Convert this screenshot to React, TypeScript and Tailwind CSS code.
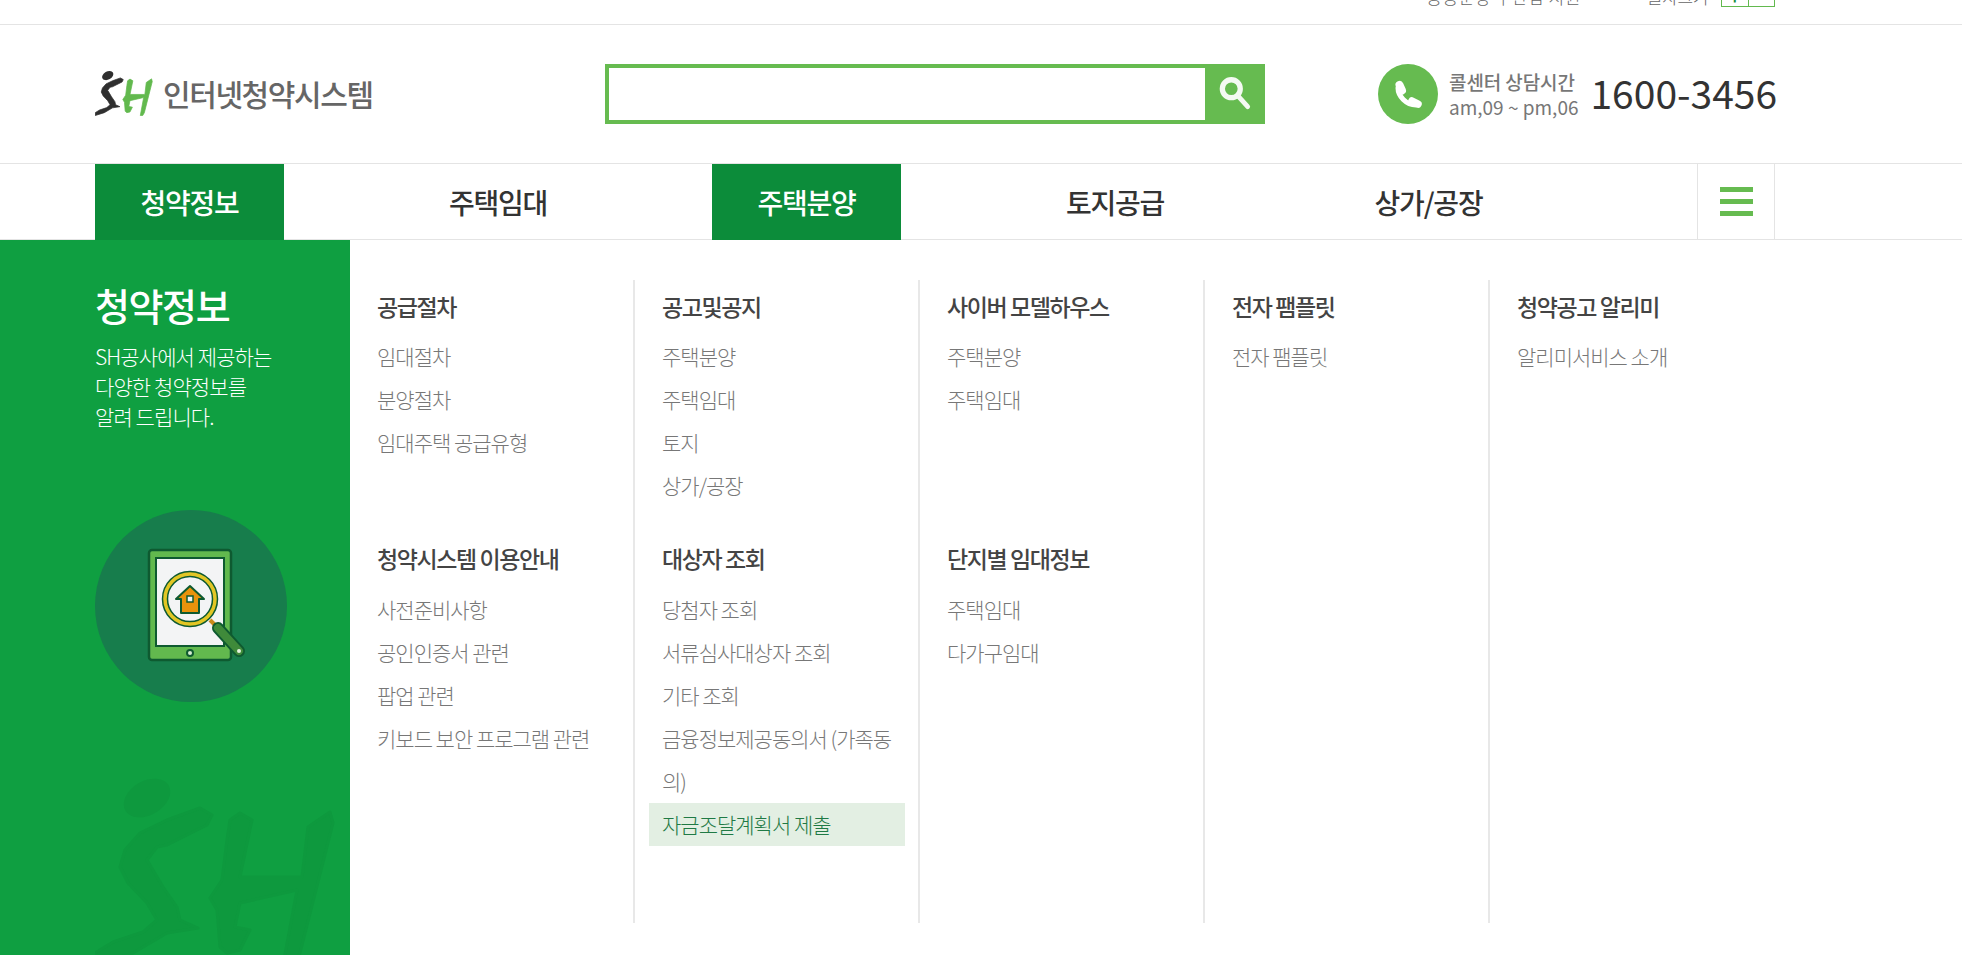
import React from "react";

const font = "font-['Noto_Sans_CJK_KR','Noto_Sans',sans-serif]";

const navItems = [
  { name: "청약정보", active: true, width: "w-[189px]" },
  { name: "주택임대", width: "w-[189px]" },
  { name: "주택분양", active: true, width: "w-[189px]" },
  { name: "토지공급", width: "w-[189px]" },
  { name: "상가/공장", width: "w-[199px]" },
];

const columns = [
  [
    { title: "공급절차", links: ["임대절차", "분양절차", "임대주택 공급유형"] },
    { title: "청약시스템 이용안내", links: ["사전준비사항", "공인인증서 관련", "팝업 관련", "키보드 보안 프로그램 관련"] },
  ],
  [
    { title: "공고및공지", links: ["주택분양", "주택임대", "토지", "상가/공장"] },
    { title: "대상자 조회", links: ["당첨자 조회", "서류심사대상자 조회", "기타 조회", "금융정보제공동의서 (가족동의)", "자금조달계획서 제출"] },
  ],
  [
    { title: "사이버 모델하우스", links: ["주택분양", "주택임대"] },
    { title: "단지별 임대정보", links: ["주택임대", "다가구임대"] },
  ],
  [{ title: "전자 팸플릿", links: ["전자 팸플릿"] }],
  [{ title: "청약공고 알리미", links: ["알리미서비스 소개"] }],
];

// runner + H mark, used for the header logo and the watermark
const SHLogo = ({ dark, green, className }: { dark: string; green: string; className?: string }) => (
  <svg viewBox="0 0 240 192" className={className}>
    <ellipse cx="52" cy="23" rx="25" ry="17" fill={dark} transform="rotate(-30 52 23)" />
    <path
      d="M117 40 L105 33 L72 45 L45 58 L30 75 L25 92 L33 108 L52 128 L62 145 L48 157 L18 167 L0 178 L0 190 L38 178 L72 158 L103 153 L85 145 L82 132 L68 112 L52 85 L62 72 L72 70 L112 50 Z"
      fill={dark}
      stroke={dark}
      strokeWidth="3"
      strokeLinejoin="round"
    />
    <path
      d="M145 38 L157 45 L145 102 L207 102 L213 52 L235 37 L238 48 L205 178 L198 190 L188 190 L202 115 L145 128 L140 152 L155 155 L145 175 L132 178 L125 172 L122 135 L115 123 L127 105 L132 65 L135 45 Z"
      fill={green}
      stroke={green}
      strokeWidth="3"
      strokeLinejoin="round"
    />
  </svg>
);

const TabletIcon = () => (
  <svg viewBox="0 0 192 192" className="w-[192px] h-[192px]">
    <circle cx="96" cy="96" r="96" fill="#177d4c" />
    <g transform="translate(-2 -2)">
      <rect x="56" y="42" width="82" height="110" rx="3" fill="#62b94e" stroke="#0e5a30" strokeWidth="2.5" />
      <rect x="63" y="50" width="68" height="88" fill="#f3f4f5" stroke="#0e5a30" strokeWidth="2" />
      <circle cx="97" cy="145" r="3" fill="#d8ecd2" stroke="#0e5a30" strokeWidth="2" />
      <circle cx="97" cy="91" r="25" fill="#f3f4f5" stroke="#0e5a30" strokeWidth="6.5" />
      <circle cx="97" cy="91" r="25" fill="none" stroke="#e2c624" strokeWidth="3.5" />
      <path d="M83 91 L97 78 L111 91 L106 91 L106 105 L88 105 L88 91 Z" fill="#e8930c" stroke="#0e5a30" strokeWidth="2" strokeLinejoin="round" />
      <rect x="94" y="88" width="6" height="6" fill="#f3f4f5" stroke="#0e5a30" strokeWidth="1.5" />
      <path d="M117 112 L124 119" stroke="#c98a1a" strokeWidth="4" />
      <path d="M125 120 L146 143" stroke="#0e5a30" strokeWidth="12" strokeLinecap="round" />
      <path d="M125 120 L146 143" stroke="#3f8a3a" strokeWidth="8" strokeLinecap="round" />
      <circle cx="146" cy="143" r="2" fill="#e6f3e0" />
    </g>
  </svg>
);

const App = () => {
  return (
    <div className={`${font} w-full h-[955px] overflow-hidden bg-white text-[#333]`}>
      {/* top bar, text is cut by the edge of the screenshot */}
      <div className="h-[25px] border-b border-[#e4e4e4] overflow-hidden">
        <div className="ml-[95px] w-[1680px] -mt-[14px] h-[21px] flex justify-end items-end text-[17px] leading-[21px] font-light text-[#666]">
          <span className="tracking-[0.6px]">공공분양 무관심 지원</span>
          <span className="ml-[66px] tracking-[-0.4px]">글자크기</span>
          <div className="ml-[13px] w-[54px] h-[21px] border border-[#62b94e] flex">
            <span className="w-[27px] border-r border-[#62b94e] text-center text-[#0c8c3a] font-bold leading-[19px]">+</span>
            <span className="w-[26px] text-center leading-[19px]">-</span>
          </div>
        </div>
      </div>

      {/* header */}
      <div className="h-[139px] border-b border-[#e4e4e4]">
        <div className="ml-[95px] w-[1680px] h-full flex items-center">
          <div className="w-[510px] shrink-0 flex items-center -mt-[3px]">
            <SHLogo dark="#2f2f2f" green="#62b94e" className="w-[58px] h-[46px]" />
            <span className="ml-[10px] mt-[1px] text-[30px] leading-[38px] tracking-[-1.4px] text-[#666] font-medium">인터넷청약시스템</span>
          </div>
          <div className="w-[660px] h-[60px] flex border-[4px] border-[#66bb50] shrink-0">
            <div className="flex-1 bg-white" />
            <div className="w-[60px] -mr-[4px] -my-[4px] bg-[#66bb50] flex items-center justify-center">
              <svg viewBox="0 0 32 36" className="w-[34px] h-[38px]">
                <circle cx="12.5" cy="13" r="8.5" fill="none" stroke="#f4faf2" strokeWidth="5" />
                <path d="M19 20 L28 30" stroke="#f4faf2" strokeWidth="4.5" strokeLinecap="round" />
              </svg>
            </div>
          </div>
          <div className="ml-[113px] flex items-center">
            <div className="w-[60px] h-[60px] rounded-full bg-[#66bb50]">
              <svg viewBox="0 0 60 60" className="w-[60px] h-[60px]" fill="none" stroke="#fff" strokeLinecap="round">
                <path d="M21.5 21 L24 26.5" strokeWidth="8" />
                <path d="M20 24 C20 32 28 41 38 41" strokeWidth="5" />
                <path d="M34 37 L40 40" strokeWidth="7.5" />
              </svg>
            </div>
            <div className="ml-[11px] flex flex-col text-[#777] whitespace-nowrap">
              <span className="text-[19px] leading-[25px] tracking-[-0.1px] font-medium">콜센터 상담시간</span>
              <span className="text-[19px] leading-[25px] tracking-[0px]">am,09 ~ pm,06</span>
            </div>
            <span className="ml-[12px] -mt-[4px] text-[39px] leading-[44px] text-[#333] whitespace-nowrap">1600-3456</span>
          </div>
        </div>
      </div>

      {/* main nav */}
      <div className="h-[76px] border-b border-[#e4e4e4]">
        <div className="ml-[95px] w-[1680px] h-[75px] flex justify-between">
          <div className="flex gap-[119.5px]">
            {navItems.map((item) => (
              <div
                key={item.name}
                className={`${item.width} h-[76px] flex items-center justify-center text-[28px] tracking-[-1.2px] font-medium ${
                  item.active ? "bg-[#0c8c3a] text-white" : "text-[#333]"
                }`}
              >
                {item.name}
              </div>
            ))}
          </div>
          <div className="w-[78px] border-x border-[#e4e4e4] flex flex-col items-center justify-center gap-[7px]">
            <span className="w-[33px] h-[5px] bg-[#66bb50]" />
            <span className="w-[33px] h-[5px] bg-[#66bb50]" />
            <span className="w-[33px] h-[5px] bg-[#66bb50]" />
          </div>
        </div>
      </div>

      {/* dropdown */}
      <div className="flex h-[715px]">
        <div className="w-[350px] shrink-0 bg-[#0f9f41] pl-[95px] relative overflow-hidden">
          <h2 className="mt-[37px] text-[38px] leading-[56px] tracking-[-1.4px] font-medium text-white">청약정보</h2>
          <p className="mt-[8px] text-[21px] leading-[30px] tracking-[-0.9px] font-light text-white">
            SH공사에서 제공하는
            <br />
            다양한 청약정보를
            <br />
            알려 드립니다.
          </p>
          <div className="mt-[79px]">
            <TabletIcon />
          </div>
          <SHLogo dark="#0e993e" green="#0e993e" className="absolute left-0 top-[535px] ml-[95px] w-[240px] h-[192px]" />
        </div>
        <div className="flex pt-[40px] h-[683px]">
          {columns.map((col, i) => (
            <div
              key={i}
              className={`w-[285px] pl-[14px] pt-[10px] ${i < 4 ? "border-r-2 border-[#e8e8e8]" : ""}`}
            >
              {col.map((group, g) => (
                <div key={group.title} className={`w-[256px] ${g === 0 ? "h-[252px]" : ""}`}>
                  <h3 className="pl-[13px] text-[23px] leading-[32px] tracking-[-1.4px] font-medium text-[#444]">{group.title}</h3>
                  <ul className={g === 0 ? "mt-[13px]" : "mt-[14px]"}>
                    {group.links.map((link) => (
                      <li
                        key={link}
                        className={`px-[13px] text-[21px] leading-[43px] tracking-[-1px] font-light ${
                          link === "자금조달계획서 제출" ? "bg-[#e3efe3] text-[#1f7a45]" : "text-[#777]"
                        }`}
                      >
                        {link}
                      </li>
                    ))}
                  </ul>
                </div>
              ))}
            </div>
          ))}
        </div>
      </div>
    </div>
  );
};

export default App;
